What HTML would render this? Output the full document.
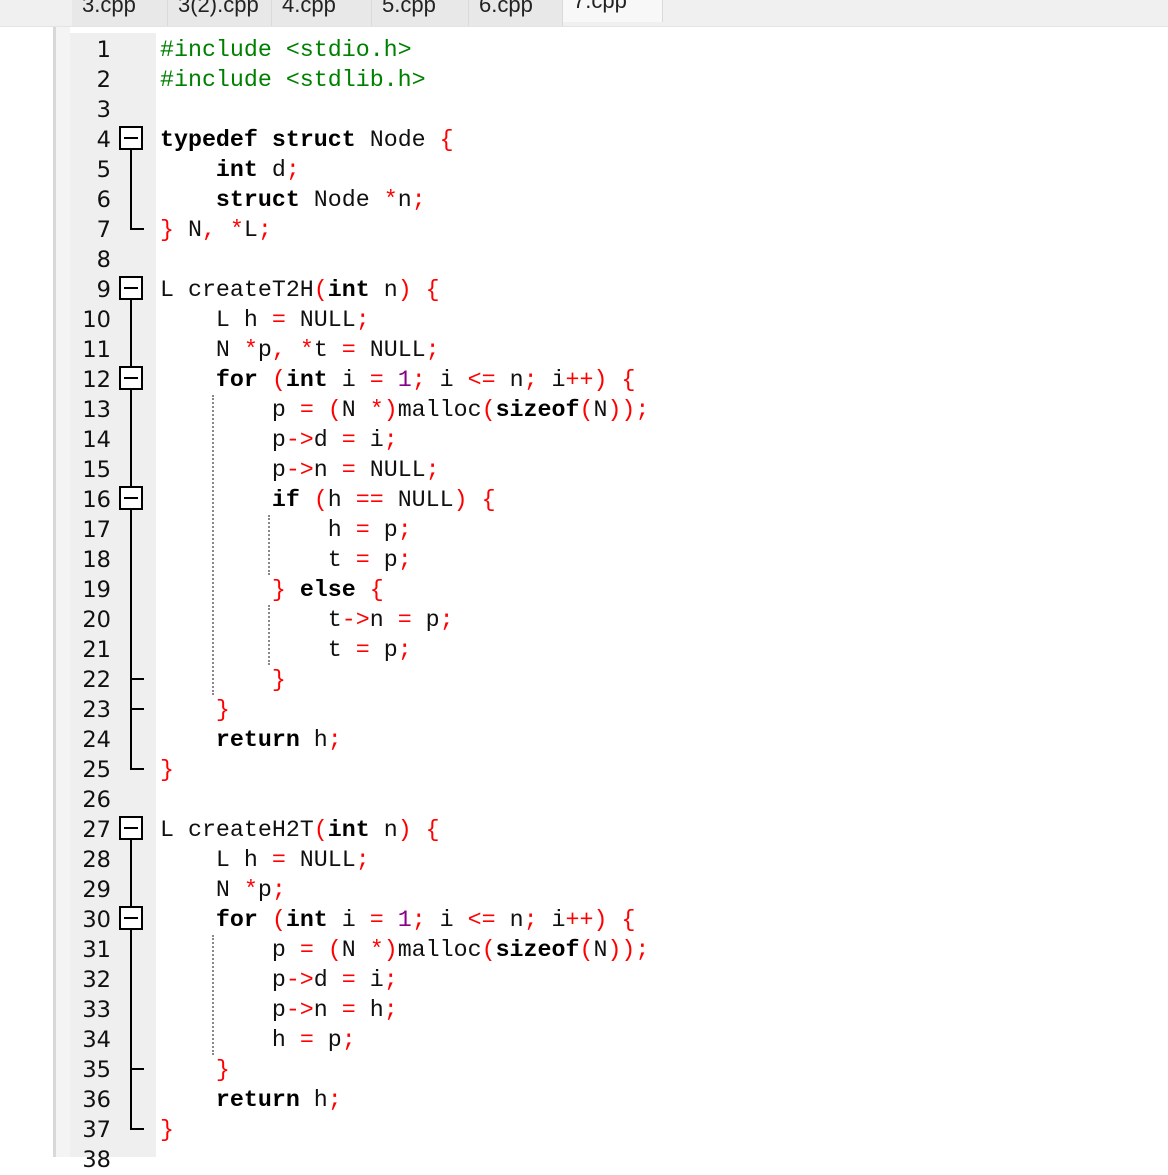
<!DOCTYPE html>
<html><head><meta charset="utf-8"><style>
body{margin:0;width:1168px;height:1157px;background:#fff;position:relative;overflow:hidden;font-family:"Liberation Mono",monospace}
.tabs{position:absolute;left:0;top:0;width:1168px;height:26px;background:#f0f0f0;border-bottom:1px solid #e4e4e4}
.tab{position:absolute;top:-8px;height:34px;font:22px "Liberation Sans",sans-serif;color:#222;border-right:1px solid #dadada;box-sizing:border-box;padding-left:10px}
.left{position:absolute;left:53px;top:27px;width:3px;height:1130px;background:#d8d8d8}
.left2{position:absolute;left:56px;top:27px;width:14px;height:1130px;background:#f4f4f4}
.gut{position:absolute;left:70px;top:33px;width:86px;height:1124px;background:#efefef}
.ln{position:absolute;left:70px;width:41px;text-align:right;font-size:22.5px;color:#111;font-family:"DejaVu Sans",sans-serif;line-height:30px;margin-top:1px}
.c{position:absolute;left:160px;font-size:23.3px;line-height:30px;white-space:pre;color:#101010;margin-top:1px}
.k{font-weight:bold;color:#000}.o{color:#f00}.n{color:#8a008a}.p{color:#008000}
.box{position:absolute;left:119px;width:24px;height:24px;border:2px solid #000;background:#fff;box-sizing:border-box;margin-top:-1px}
.box:after{content:"";position:absolute;left:3px;right:3px;top:9px;height:2px;background:#000}
.v{position:absolute;left:130px;width:2px;background:#000}
.t{position:absolute;left:130px;width:14px;height:2px;background:#000}
.d{position:absolute;width:0;border-left:2px dotted #888}
</style></head><body>
<div class="tabs">
<div class="tab" style="left:72px;width:96px;background:#e8e8e8">3.cpp</div>
<div class="tab" style="left:168px;width:104px;background:#e8e8e8">3(2).cpp</div>
<div class="tab" style="left:272px;width:100px;background:#e8e8e8">4.cpp</div>
<div class="tab" style="left:372px;width:97px;background:#e8e8e8">5.cpp</div>
<div class="tab" style="left:469px;width:94px;background:#e8e8e8">6.cpp</div>
<div class="tab" style="left:563px;width:100px;background:#f8f8f8;top:-12px">7.cpp</div>
</div>
<div class="left"></div><div class="left2"></div><div class="gut"></div>
<div class="ln" style="top:34px">1</div><div class="ln" style="top:64px">2</div><div class="ln" style="top:94px">3</div><div class="ln" style="top:124px">4</div><div class="ln" style="top:154px">5</div><div class="ln" style="top:184px">6</div><div class="ln" style="top:214px">7</div><div class="ln" style="top:244px">8</div><div class="ln" style="top:274px">9</div><div class="ln" style="top:304px">10</div><div class="ln" style="top:334px">11</div><div class="ln" style="top:364px">12</div><div class="ln" style="top:394px">13</div><div class="ln" style="top:424px">14</div><div class="ln" style="top:454px">15</div><div class="ln" style="top:484px">16</div><div class="ln" style="top:514px">17</div><div class="ln" style="top:544px">18</div><div class="ln" style="top:574px">19</div><div class="ln" style="top:604px">20</div><div class="ln" style="top:634px">21</div><div class="ln" style="top:664px">22</div><div class="ln" style="top:694px">23</div><div class="ln" style="top:724px">24</div><div class="ln" style="top:754px">25</div><div class="ln" style="top:784px">26</div><div class="ln" style="top:814px">27</div><div class="ln" style="top:844px">28</div><div class="ln" style="top:874px">29</div><div class="ln" style="top:904px">30</div><div class="ln" style="top:934px">31</div><div class="ln" style="top:964px">32</div><div class="ln" style="top:994px">33</div><div class="ln" style="top:1024px">34</div><div class="ln" style="top:1054px">35</div><div class="ln" style="top:1084px">36</div><div class="ln" style="top:1114px">37</div><div class="ln" style="top:1144px">38</div>
<div class="v" style="top:150px;height:80px"></div><div class="t" style="top:228px"></div>
<div class="v" style="top:300px;height:470px"></div><div class="t" style="top:678px"></div><div class="t" style="top:708px"></div><div class="t" style="top:768px"></div>
<div class="v" style="top:840px;height:290px"></div><div class="t" style="top:1068px"></div><div class="t" style="top:1128px"></div>
<div class="box" style="top:127px"></div><div class="box" style="top:277px"></div><div class="box" style="top:367px"></div><div class="box" style="top:487px"></div><div class="box" style="top:817px"></div><div class="box" style="top:907px"></div>
<div class="d" style="left:212px;top:395px;height:300px"></div>
<div class="d" style="left:268px;top:515px;height:60px"></div>
<div class="d" style="left:268px;top:605px;height:60px"></div>
<div class="d" style="left:212px;top:935px;height:120px"></div>
<div class="c" style="top:34px"><span class="p">#include &lt;stdio.h&gt;</span></div>
<div class="c" style="top:64px"><span class="p">#include &lt;stdlib.h&gt;</span></div>
<div class="c" style="top:124px"><span class="k">typedef</span> <span class="k">struct</span> Node <span class="o">{</span></div>
<div class="c" style="top:154px">    <span class="k">int</span> d<span class="o">;</span></div>
<div class="c" style="top:184px">    <span class="k">struct</span> Node <span class="o">*</span>n<span class="o">;</span></div>
<div class="c" style="top:214px"><span class="o">}</span> N<span class="o">,</span> <span class="o">*</span>L<span class="o">;</span></div>
<div class="c" style="top:274px">L createT2H<span class="o">(</span><span class="k">int</span> n<span class="o">)</span> <span class="o">{</span></div>
<div class="c" style="top:304px">    L h <span class="o">=</span> NULL<span class="o">;</span></div>
<div class="c" style="top:334px">    N <span class="o">*</span>p<span class="o">,</span> <span class="o">*</span>t <span class="o">=</span> NULL<span class="o">;</span></div>
<div class="c" style="top:364px">    <span class="k">for</span> <span class="o">(</span><span class="k">int</span> i <span class="o">=</span> <span class="n">1</span><span class="o">;</span> i <span class="o">&lt;=</span> n<span class="o">;</span> i<span class="o">++)</span> <span class="o">{</span></div>
<div class="c" style="top:394px">        p <span class="o">=</span> <span class="o">(</span>N <span class="o">*)</span>malloc<span class="o">(</span><span class="k">sizeof</span><span class="o">(</span>N<span class="o">));</span></div>
<div class="c" style="top:424px">        p<span class="o">-&gt;</span>d <span class="o">=</span> i<span class="o">;</span></div>
<div class="c" style="top:454px">        p<span class="o">-&gt;</span>n <span class="o">=</span> NULL<span class="o">;</span></div>
<div class="c" style="top:484px">        <span class="k">if</span> <span class="o">(</span>h <span class="o">==</span> NULL<span class="o">)</span> <span class="o">{</span></div>
<div class="c" style="top:514px">            h <span class="o">=</span> p<span class="o">;</span></div>
<div class="c" style="top:544px">            t <span class="o">=</span> p<span class="o">;</span></div>
<div class="c" style="top:574px">        <span class="o">}</span> <span class="k">else</span> <span class="o">{</span></div>
<div class="c" style="top:604px">            t<span class="o">-&gt;</span>n <span class="o">=</span> p<span class="o">;</span></div>
<div class="c" style="top:634px">            t <span class="o">=</span> p<span class="o">;</span></div>
<div class="c" style="top:664px">        <span class="o">}</span></div>
<div class="c" style="top:694px">    <span class="o">}</span></div>
<div class="c" style="top:724px">    <span class="k">return</span> h<span class="o">;</span></div>
<div class="c" style="top:754px"><span class="o">}</span></div>
<div class="c" style="top:814px">L createH2T<span class="o">(</span><span class="k">int</span> n<span class="o">)</span> <span class="o">{</span></div>
<div class="c" style="top:844px">    L h <span class="o">=</span> NULL<span class="o">;</span></div>
<div class="c" style="top:874px">    N <span class="o">*</span>p<span class="o">;</span></div>
<div class="c" style="top:904px">    <span class="k">for</span> <span class="o">(</span><span class="k">int</span> i <span class="o">=</span> <span class="n">1</span><span class="o">;</span> i <span class="o">&lt;=</span> n<span class="o">;</span> i<span class="o">++)</span> <span class="o">{</span></div>
<div class="c" style="top:934px">        p <span class="o">=</span> <span class="o">(</span>N <span class="o">*)</span>malloc<span class="o">(</span><span class="k">sizeof</span><span class="o">(</span>N<span class="o">));</span></div>
<div class="c" style="top:964px">        p<span class="o">-&gt;</span>d <span class="o">=</span> i<span class="o">;</span></div>
<div class="c" style="top:994px">        p<span class="o">-&gt;</span>n <span class="o">=</span> h<span class="o">;</span></div>
<div class="c" style="top:1024px">        h <span class="o">=</span> p<span class="o">;</span></div>
<div class="c" style="top:1054px">    <span class="o">}</span></div>
<div class="c" style="top:1084px">    <span class="k">return</span> h<span class="o">;</span></div>
<div class="c" style="top:1114px"><span class="o">}</span></div>
</body></html>
